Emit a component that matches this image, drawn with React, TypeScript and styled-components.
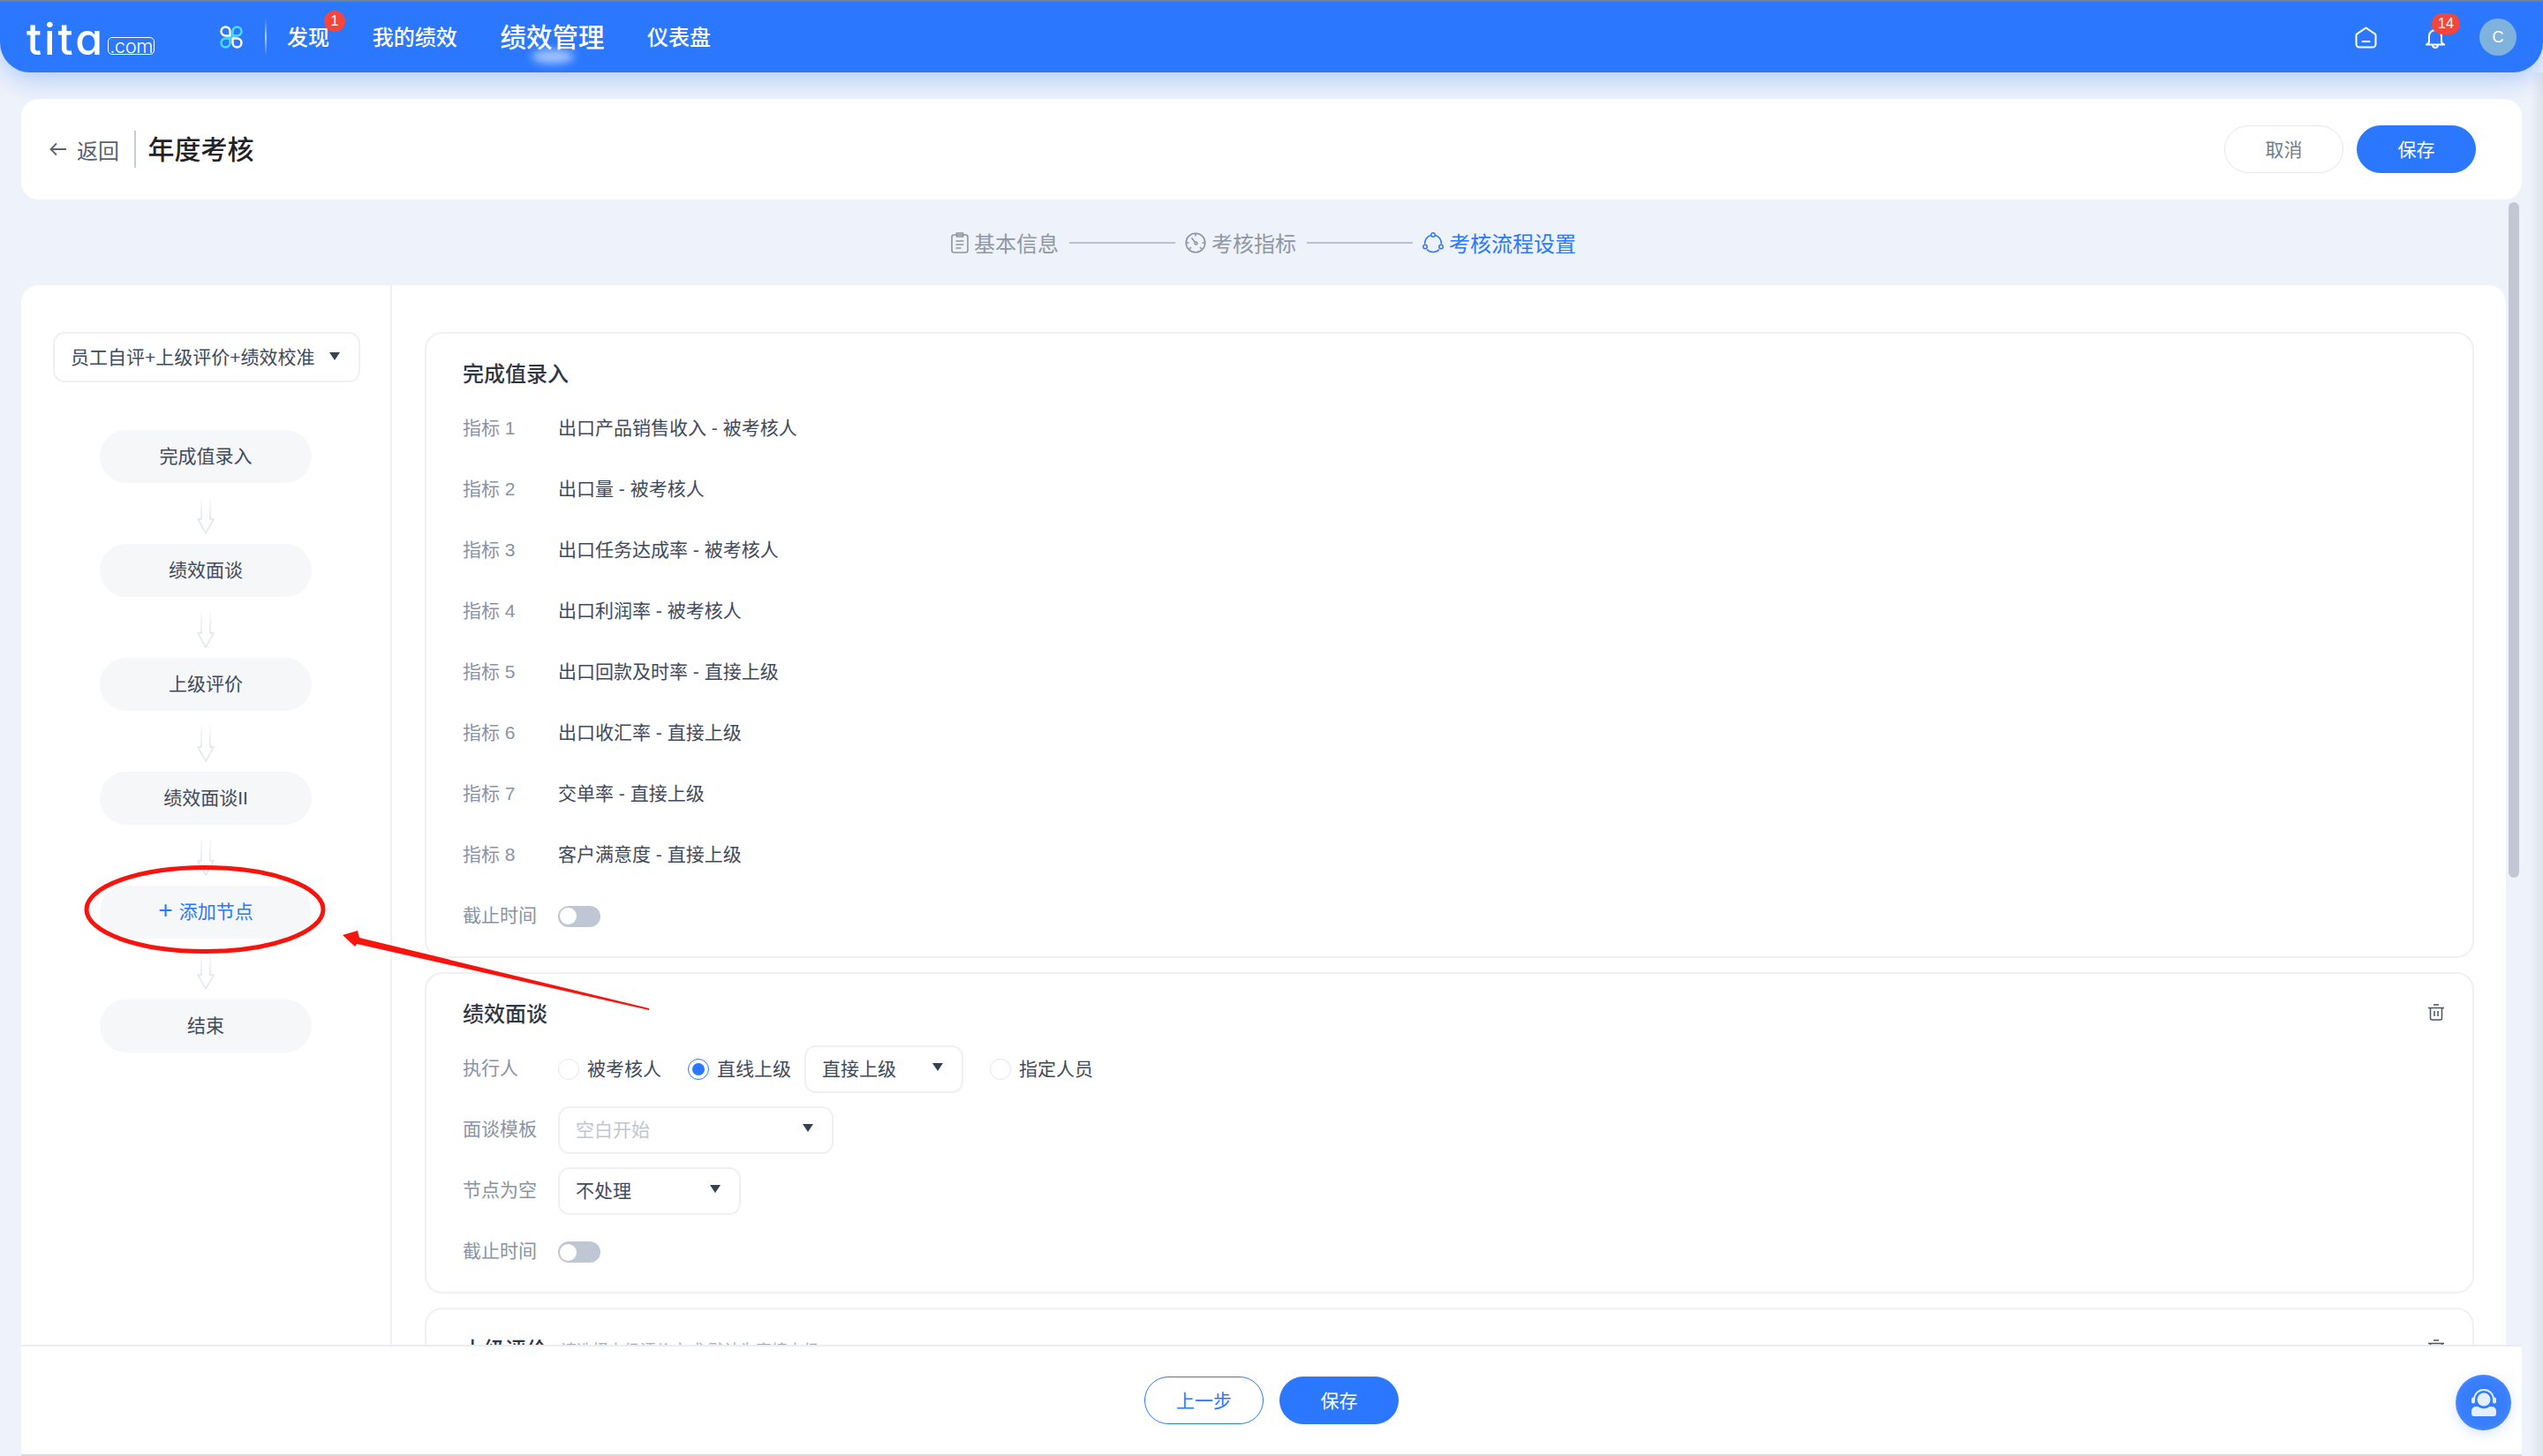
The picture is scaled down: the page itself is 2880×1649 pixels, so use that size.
import React from "react";
import styled, { createGlobalStyle } from "styled-components";

const BLUE = "#2b78ff";

const GlobalStyle = createGlobalStyle`
    html, body {
        margin: 0;
        padding: 0;
        background: #eef2fa;
        font-family: "Liberation Sans", "Noto Sans CJK SC", sans-serif;
    }
    * {
        box-sizing: border-box;
    }
`;

const Page = styled.div`
    position: relative;
    display: flex;
    flex-direction: column;
    width: 2880px;
    height: 1649px;
    overflow: hidden;
    background: #eef2fa;
`;

/* top navigation */
const TopBar = styled.header`
    position: relative;
    z-index: 2;
    flex: none;
    display: flex;
    align-items: center;
    height: 82px;
    padding: 0 30px;
    border-top: 2px solid #6b8299;
    border-radius: 0 0 34px 34px;
    background: ${BLUE};
    box-shadow: 0 8px 28px rgba(43, 120, 255, 0.32);
    color: #fff;
`;

const Logo = styled.div`
    display: flex;
    align-items: flex-end;
    width: 145px;
    height: 36px;
    margin-top: 4px;
`;

const LogoWord = styled.span`
    font-family: Inter, "Liberation Sans", sans-serif;
    font-feature-settings: "cv11";
    font-size: 50px;
    font-weight: 500;
    line-height: 36px;
    letter-spacing: 3px;
`;

const LogoDomain = styled.span`
    display: flex;
    align-items: center;
    justify-content: center;
    width: 53px;
    height: 20px;
    margin-left: auto;
    border: 1px solid #fff;
    border-radius: 5px;
    font-family: Inter, "Liberation Sans", sans-serif;
    font-size: 22px;
    font-weight: 300;
    line-height: 1;
    letter-spacing: -0.5px;
    white-space: nowrap;
`;

const GridIcon = styled.svg`
    flex: none;
    width: 26px;
    height: 26px;
    margin-left: 74px;
`;

const NavDivider = styled.span`
    flex: none;
    width: 2px;
    height: 42px;
    margin: 0 23px 0 25px;
    background: linear-gradient(180deg, transparent, rgba(255, 255, 255, 0.65), transparent);
`;

const Nav = styled.nav`
    display: flex;
    align-items: center;
    gap: 48.7px;
    margin-top: 2px;
`;

const NavItem = styled.a<{ $active?: boolean }>`
    position: relative;
    font-size: ${(p) => (p.$active ? "29.5px" : "24px")};
    font-weight: 500;
    line-height: 30px;
    white-space: nowrap;

    ${(p) =>
        p.$active &&
        `
        &::after {
            content: "";
            position: absolute;
            left: 36px;
            bottom: -14px;
            width: 48px;
            height: 16px;
            border-radius: 50%;
            background: rgba(255, 255, 255, 0.55);
            filter: blur(5px);
        }
    `}
`;

const Badge = styled.span<{ $wide?: boolean }>`
    position: absolute;
    display: flex;
    align-items: center;
    justify-content: center;
    width: ${(p) => (p.$wide ? "32px" : "24px")};
    height: 24px;
    border-radius: 12px;
    background: #f6453a;
    color: #fff;
    font-size: 16px;
    font-weight: 400;
    line-height: 1;
`;

const DiscoverBadge = styled(Badge)`
    top: -16px;
    left: 42px;
`;

const BellBadge = styled(Badge)`
    top: -17px;
    left: 7px;
`;

const TopActions = styled.div`
    display: flex;
    align-items: center;
    margin-left: auto;
`;

const HomeIcon = styled.svg`
    width: 25px;
    height: 25px;
`;

const BellWrap = styled.div`
    position: relative;
    width: 22px;
    height: 23px;
    margin: 2px 39px 0 55px;
`;

const Avatar = styled.div`
    display: flex;
    align-items: center;
    justify-content: center;
    width: 42px;
    height: 42px;
    border-radius: 50%;
    background: #7fb3de;
    font-size: 18px;
`;

/* title card */
const TitleCard = styled.section`
    flex: none;
    display: flex;
    align-items: center;
    height: 114px;
    margin: 30px 24px 0;
    padding: 0 52px 0 32px;
    border-radius: 20px;
    background: #fff;
`;

const BackLink = styled.a`
    display: flex;
    align-items: center;
    gap: 11px;
    color: #5a6270;
    font-size: 24px;
`;

const TitleDivider = styled.span`
    width: 1.5px;
    height: 42px;
    margin: 0 14px 0 17px;
    background: #c8ccd3;
`;

const PageTitle = styled.h1`
    margin: 0 0 5px;
    color: #1f2329;
    font-size: 30px;
    font-weight: 500;
`;

const ButtonRow = styled.div<{ $gap: number }>`
    display: flex;
    gap: ${(p) => p.$gap}px;
`;

const TitleActions = styled(ButtonRow)`
    margin-left: auto;
`;

const Button = styled.button<{ $variant: "primary" | "plain" | "outline" }>`
    width: 135px;
    height: 54px;
    padding: 0;
    border-radius: 27px;
    border: 1.5px solid
        ${(p) => (p.$variant === "plain" ? "#e3e6ee" : BLUE)};
    background: ${(p) => (p.$variant === "primary" ? BLUE : "#fff")};
    color: ${(p) =>
        p.$variant === "primary" ? "#fff" : p.$variant === "outline" ? BLUE : "#747c89"};
    font-family: inherit;
    font-size: 21px;
    line-height: 1;
`;

/* stepper */
const Stepper = styled.div`
    flex: none;
    display: flex;
    align-items: center;
    justify-content: center;
    width: 2814px;
    height: 97px;
    margin-left: 24px;
`;

const Step = styled.div<{ $active?: boolean }>`
    display: flex;
    align-items: center;
    gap: 6px;
    color: ${(p) => (p.$active ? BLUE : "#8f97a5")};
    font-size: 24px;
`;

const StepLine = styled.span`
    width: 120px;
    height: 2px;
    margin: 0 11px 0 12px;
    background: #b8c2d2;
`;

/* main panel */
const Panel = styled.main`
    flex: 1;
    display: flex;
    width: 2814px;
    min-height: 0;
    margin-left: 24px;
    overflow: hidden;
    border-radius: 20px 20px 0 0;
    background: #fff;
`;

const Sidebar = styled.aside`
    flex: none;
    display: flex;
    flex-direction: column;
    align-items: center;
    width: 420px;
    padding-top: 53px;
    border-right: 2px solid #f0f1f4;
`;

const Select = styled.div<{ $width: number; $height?: number; $muted?: boolean }>`
    flex: none;
    display: flex;
    align-items: center;
    justify-content: space-between;
    width: ${(p) => p.$width}px;
    height: ${(p) => p.$height ?? 54}px;
    padding: 0 21px 5px 18px;
    border: 2px solid #eef0f4;
    border-radius: 13px;
    background: #fff;
    color: ${(p) => (p.$muted ? "#c0c6d0" : "#3f4a5a")};
    font-size: 21px;
    white-space: nowrap;
`;

const SidebarSelect = styled(Select)`
    align-self: flex-start;
    margin: 0 0 54px 36px;
    padding-bottom: 3px;
`;

const Caret = styled.i`
    flex: none;
    width: 0;
    height: 0;
    border-style: solid;
    border-width: 9px 6px 0;
    border-color: #36424f transparent transparent;
`;

const Node = styled.div<{ $add?: boolean }>`
    flex: none;
    display: flex;
    align-items: center;
    justify-content: center;
    width: 240px;
    height: 60px;
    padding-bottom: 5px;
    border-radius: 30px;
    background: #f6f7f9;
    color: ${(p) => (p.$add ? BLUE : "#3f4a5a")};
    font-size: 21px;
`;

const PlusMark = styled.span`
    margin-right: 7px;
    font-size: 28px;
    font-weight: 300;
    line-height: 1;
`;

const Connector = styled.div`
    flex: none;
    display: flex;
    align-items: center;
    justify-content: center;
    height: 69px;
    padding-top: 5px;
`;

const Content = styled.div`
    flex: 1;
    display: flex;
    flex-direction: column;
    gap: 16px;
    min-width: 0;
    padding: 53px 36px 0 37px;
`;

const Card = styled.section<{ $bottom: number }>`
    flex: none;
    padding: 30px 0 ${(p) => p.$bottom}px 41px;
    border: 2px solid #eef0f3;
    border-radius: 20px;
`;

const CardHead = styled.div<{ $gap: number }>`
    display: flex;
    align-items: center;
    height: 30px;
    margin-bottom: ${(p) => p.$gap}px;
    padding-right: 32px;
`;

const CardTitle = styled.h2`
    margin: 0 0 4px;
    color: #2f3744;
    font-size: 24px;
    font-weight: 500;
    white-space: nowrap;
`;

const CardHint = styled.span`
    margin-left: 15px;
    color: #a5adba;
    font-size: 18px;
    white-space: nowrap;
`;

const TrashIcon = styled.svg`
    width: 18px;
    height: 19px;
    margin: 0 0 4px auto;
`;

const MetricRow = styled.div`
    display: flex;
    align-items: center;
    height: 69px;
    font-size: 21px;
`;

const FormRows = styled.div`
    display: flex;
    flex-direction: column;
    gap: 15px;
`;

const FormRow = styled.div`
    display: flex;
    align-items: center;
    height: 54px;
    font-size: 21px;
`;

const Label = styled.span`
    flex: none;
    width: 108px;
    margin-bottom: 6px;
    color: #8a93a3;
`;

const Value = styled.span`
    margin-bottom: 6px;
    color: #3f4a5a;
`;

const RadioItem = styled.label`
    display: flex;
    align-items: center;
    gap: 9px;
    margin-right: 30px;
    color: #3f4a5a;
    white-space: nowrap;
`;

const RadioText = styled.span`
    margin-bottom: 5px;
`;

const RadioDot = styled.span<{ $checked?: boolean }>`
    flex: none;
    display: flex;
    align-items: center;
    justify-content: center;
    width: 24px;
    height: 24px;
    border: 1.5px solid ${(p) => (p.$checked ? BLUE : "#e3e6ec")};
    border-radius: 50%;

    &::after {
        content: "";
        width: 14px;
        height: 14px;
        border-radius: 50%;
        background: ${(p) => (p.$checked ? BLUE : "transparent")};
    }
`;

const RadioSelect = styled(Select)`
    margin: 0 30px 0 -15px;
`;

const Toggle = styled.span`
    display: flex;
    align-items: center;
    width: 48px;
    height: 24px;
    padding: 0 2px;
    border-radius: 12px;
    background: #bfc7d5;

    &::before {
        content: "";
        width: 19px;
        height: 19px;
        border-radius: 50%;
        background: #fff;
    }
`;

/* things lying over the page */
const Footer = styled.footer`
    position: absolute;
    z-index: 3;
    left: 24px;
    right: 24px;
    bottom: 0;
    display: flex;
    align-items: center;
    justify-content: center;
    height: 126px;
    border-top: 2px solid #e9ecf1;
    border-bottom: 2px solid #d5dbe3;
    background: #fff;
`;

const HelpButton = styled.div`
    position: absolute;
    right: 12px;
    bottom: 27px;
    display: flex;
    align-items: center;
    justify-content: center;
    width: 63px;
    height: 63px;
    border-radius: 50%;
    background: radial-gradient(circle, #2f78ff 0%, #3a80ff 62%, #6aa2ff 100%);
    box-shadow: 0 4px 14px rgba(43, 120, 255, 0.18);
`;

const ScrollThumb = styled.div`
    position: absolute;
    z-index: 3;
    top: 229px;
    right: 27px;
    width: 12px;
    height: 765px;
    border-radius: 6px;
    background: #c1c7d3;
`;

const EdgeShade = styled.div`
    position: absolute;
    z-index: 1;
    top: 82px;
    right: 0;
    bottom: 0;
    width: 14px;
    background: linear-gradient(90deg, rgba(214, 218, 228, 0), rgba(214, 218, 228, 0.7));
`;

const Annotation = styled.svg`
    position: absolute;
    z-index: 4;
    top: 0;
    left: 0;
    width: 2880px;
    height: 1649px;
    pointer-events: none;
`;

const METRICS = [
    "出口产品销售收入 - 被考核人",
    "出口量 - 被考核人",
    "出口任务达成率 - 被考核人",
    "出口利润率 - 被考核人",
    "出口回款及时率 - 直接上级",
    "出口收汇率 - 直接上级",
    "交单率 - 直接上级",
    "客户满意度 - 直接上级",
];

const NODES = ["完成值录入", "绩效面谈", "上级评价", "绩效面谈II"];

const DownArrow = () => (
    <svg width="20" height="42" viewBox="0 0 20 42" fill="none">
        <defs>
            <linearGradient id="arrowFade" x1="0" y1="0" x2="0" y2="1">
                <stop offset="0" stopColor="#e3e6ee" stopOpacity="0.2" />
                <stop offset="0.6" stopColor="#dfe3ec" />
            </linearGradient>
        </defs>
        <path
            d="M5 0V25H1L10 41L19 25H15V0"
            stroke="url(#arrowFade)"
            strokeWidth="1.5"
            strokeLinejoin="round"
        />
    </svg>
);

const Trash = () => (
    <TrashIcon viewBox="0 0 18 19" fill="none" stroke="#4a5362" strokeWidth="1.5">
        <path d="M6 1h6M0 4.5h18M2.5 4.5V16a2 2 0 0 0 2 2h9a2 2 0 0 0 2-2V4.5M7 8v6M11 8v6" />
    </TrashIcon>
);

const ClipboardIcon = () => (
    <svg width="20" height="24" viewBox="0 0 20 24" fill="none" stroke="#8c95a3" strokeWidth="1.6">
        <rect x="1" y="3" width="18" height="20" rx="2.5" />
        <path d="M6.5 1h7v4h-7zM5.5 10h9M5.5 14h9M5.5 18h6" />
    </svg>
);

const GaugeIcon = () => (
    <svg width="24" height="24" viewBox="0 0 24 24" fill="none" stroke="#8c95a3" strokeWidth="1.6">
        <circle cx="12" cy="12" r="10.8" />
        <path d="M12 1.5v3M1.5 12h3M19.5 12h3M5 19l2-2M19 19l-2-2M7.5 6.5l4.5 5.5" />
        <circle cx="12.5" cy="12.5" r="1.5" />
    </svg>
);

const FlowIcon = () => (
    <svg width="24" height="24" viewBox="0 0 24 24" fill="none" stroke={BLUE} strokeWidth="1.5">
        <path d="M9.5 3.500A9.500 9.500 0 0 0 2.600 13.500M21.400 13.500A9.500 9.500 0 0 0 14.500 3.500M5 19.500a9.500 9.500 0 0 0 14 0" />
        <circle cx="12" cy="3" r="2.2" />
        <circle cx="3" cy="16.5" r="2.2" />
        <circle cx="21" cy="16.5" r="2.2" />
    </svg>
);

const App = () => {
    return (
        <Page>
            <GlobalStyle />
            <TopBar>
                <Logo>
                    <LogoWord>tita</LogoWord>
                    <LogoDomain>.com</LogoDomain>
                </Logo>
                <GridIcon viewBox="0 0 26 26" fill="none" strokeWidth="2.4">
                    <path d="M11.5 11.5H6.5a5 5 0 1 1 5-5z" stroke="#fff" />
                    <path d="M14.5 11.5h5a5 5 0 1 0-5-5z" stroke="#45e0ff" />
                    <path d="M11.5 14.5H6.5a5 5 0 1 0 5 5z" stroke="#45e0ff" />
                    <path d="M14.5 14.5h5a5 5 0 1 1-5 5z" stroke="#fff" />
                </GridIcon>
                <NavDivider />
                <Nav>
                    <NavItem>
                        发现
                        <DiscoverBadge>1</DiscoverBadge>
                    </NavItem>
                    <NavItem>我的绩效</NavItem>
                    <NavItem $active>绩效管理</NavItem>
                    <NavItem>仪表盘</NavItem>
                </Nav>
                <TopActions>
                    <HomeIcon viewBox="0 0 25 25" fill="none" stroke="#fff" strokeWidth="2">
                        <path d="M12.5 1.5 22.6 8.4a2 2 0 0 1 .9 1.700V20a3.500 3.500 0 0 1-3.500 3.500H5A3.500 3.500 0 0 1 1.500 20V10.100a2 2 0 0 1 .9-1.700z" />
                        <path d="M8.5 17h8" strokeLinecap="round" />
                    </HomeIcon>
                    <BellWrap>
                        <svg width="22" height="23" viewBox="0 0 22 23" fill="none" stroke="#fff" strokeWidth="2">
                            <path d="M4 9a7 7 0 0 1 14 0v6c0 1.500 1 2.500 3 3.500H1c2-1 3-2 3-3.500zM8 19.500c.5 2 1.500 2.500 3 2.500s2.500-.5 3-2.500" strokeLinejoin="round" />
                        </svg>
                        <BellBadge $wide>14</BellBadge>
                    </BellWrap>
                    <Avatar>C</Avatar>
                </TopActions>
            </TopBar>

            <TitleCard>
                <BackLink>
                    <svg width="20" height="16" viewBox="0 0 20 16" fill="none" stroke="#5a6270" strokeWidth="1.8">
                        <path d="M19 8H2M8 1.500 1.500 8 8 14.500" />
                    </svg>
                    返回
                </BackLink>
                <TitleDivider />
                <PageTitle>年度考核</PageTitle>
                <TitleActions $gap={15}>
                    <Button $variant="plain">取消</Button>
                    <Button $variant="primary">保存</Button>
                </TitleActions>
            </TitleCard>

            <Stepper>
                <Step>
                    <ClipboardIcon />
                    基本信息
                </Step>
                <StepLine />
                <Step>
                    <GaugeIcon />
                    考核指标
                </Step>
                <StepLine />
                <Step $active>
                    <FlowIcon />
                    考核流程设置
                </Step>
            </Stepper>

            <Panel>
                <Sidebar>
                    <SidebarSelect $width={348} $height={57}>
                        员工自评+上级评价+绩效校准
                        <Caret />
                    </SidebarSelect>
                    {NODES.map((name) => (
                        <React.Fragment key={name}>
                            <Node>{name}</Node>
                            <Connector>
                                <DownArrow />
                            </Connector>
                        </React.Fragment>
                    ))}
                    <Node $add>
                        <PlusMark>+</PlusMark>
                        添加节点
                    </Node>
                    <Connector>
                        <DownArrow />
                    </Connector>
                    <Node>结束</Node>
                </Sidebar>

                <Content>
                    <Card $bottom={11}>
                        <CardHead $gap={13}>
                            <CardTitle>完成值录入</CardTitle>
                        </CardHead>
                        {METRICS.map((metric, index) => (
                            <MetricRow key={metric}>
                                <Label>指标 {index + 1}</Label>
                                <Value>{metric}</Value>
                            </MetricRow>
                        ))}
                        <MetricRow>
                            <Label>截止时间</Label>
                            <Toggle />
                        </MetricRow>
                    </Card>

                    <Card $bottom={18}>
                        <CardHead $gap={21}>
                            <CardTitle>绩效面谈</CardTitle>
                            <Trash />
                        </CardHead>
                        <FormRows>
                            <FormRow>
                                <Label>执行人</Label>
                                <RadioItem>
                                    <RadioDot />
                                    <RadioText>被考核人</RadioText>
                                </RadioItem>
                                <RadioItem>
                                    <RadioDot $checked />
                                    <RadioText>直线上级</RadioText>
                                </RadioItem>
                                <RadioSelect $width={180}>
                                    直接上级
                                    <Caret />
                                </RadioSelect>
                                <RadioItem>
                                    <RadioDot />
                                    <RadioText>指定人员</RadioText>
                                </RadioItem>
                            </FormRow>
                            <FormRow>
                                <Label>面谈模板</Label>
                                <Select $width={312} $muted>
                                    空白开始
                                    <Caret />
                                </Select>
                            </FormRow>
                            <FormRow>
                                <Label>节点为空</Label>
                                <Select $width={207}>
                                    不处理
                                    <Caret />
                                </Select>
                            </FormRow>
                            <FormRow>
                                <Label>截止时间</Label>
                                <Toggle />
                            </FormRow>
                        </FormRows>
                    </Card>

                    <Card $bottom={120}>
                        <CardHead $gap={21}>
                            <CardTitle>上级评价</CardTitle>
                            <CardHint>请选择上级评价方式,默认为直接上级</CardHint>
                            <Trash />
                        </CardHead>
                    </Card>
                </Content>
            </Panel>

            <ScrollThumb />
            <EdgeShade />

            <Footer>
                <ButtonRow $gap={18}>
                    <Button $variant="outline">上一步</Button>
                    <Button $variant="primary">保存</Button>
                </ButtonRow>
                <HelpButton>
                    <svg width="30" height="32" viewBox="0 0 30 32" fill="none">
                        <path d="M4 14V12a11 11 0 0 1 22 0v2" stroke="#e4eeff" strokeWidth="1.8" />
                        <rect x="1" y="9.500" width="4" height="7" rx="2" fill="#e4eeff" />
                        <rect x="25" y="9.500" width="4" height="7" rx="2" fill="#e4eeff" />
                        <circle cx="15" cy="12" r="7.500" fill="#e4eeff" />
                        <path d="M1 25a5 5 0 0 1 5-5h2.500c2 1.500 4 2.200 6.500 2.200s4.500-.7 6.500-2.200H24a5 5 0 0 1 5 5v3a3 3 0 0 1-3 3H4a3 3 0 0 1-3-3z" fill="#e4eeff" />
                    </svg>
                </HelpButton>
            </Footer>

            <Annotation viewBox="0 0 2880 1649">
                <ellipse cx="232" cy="1030" rx="134" ry="47.5" fill="none" stroke="#f8140c" strokeWidth="5" />
                <path d="M388 1059 405 1054 407 1062 735 1142 735 1144 404 1069 402 1072z" fill="#f8140c" />
            </Annotation>
        </Page>
    );
};

export default App;
